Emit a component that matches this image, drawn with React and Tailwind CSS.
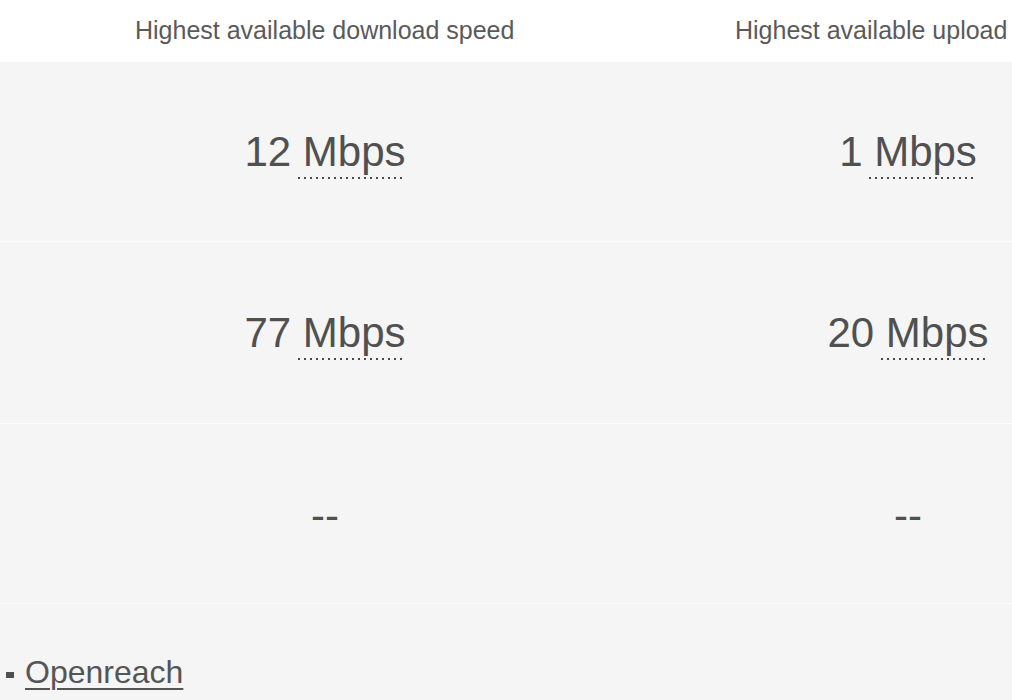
import React from "react";

const font = { fontFamily: '"Liberation Sans", Arial, sans-serif' };

function Unit({ children }) {
  return (
    <span className="relative inline-block">
      {children}
      <span className="absolute left-[-5px] right-0 top-[57px] h-[2px] bg-[image:repeating-linear-gradient(to_right,#4a4a4a_0px,#4a4a4a_2px,transparent_2px,transparent_6px)]" />
    </span>
  );
}

function Row({ h, a, b }) {
  return (
    <div className={`grid grid-cols-[125px_400px_183px_400px] items-center border-b border-[#fcfcfc] ${h} text-[42px] text-[#505050]`}>
      <div />
      <div className="text-center whitespace-nowrap">{a}</div>
      <div />
      <div className="text-center whitespace-nowrap">{b}</div>
    </div>
  );
}

export default function App() {
  return (
    <div className="w-[1012px] h-[700px] overflow-hidden bg-[#f5f5f5]" style={font}>
      <div className="grid grid-cols-[135px_600px_277px] h-[62px] bg-white pt-[16px] text-[25px] leading-[28px] text-[#5a5a5a] whitespace-nowrap overflow-hidden">
        <div />
        <div>Highest available download speed</div>
        <div>Highest available upload</div>
      </div>
      <Row h="h-[180px]" a={<>12 <Unit>Mbps</Unit></>} b={<>1 <Unit>Mbps</Unit></>} />
      <Row h="h-[182px]" a={<>77 <Unit>Mbps</Unit></>} b={<>20 <Unit>Mbps</Unit></>} />
      <Row h="h-[180px]" a={<span className="relative top-[2px]">--</span>} b={<span className="relative top-[2px]">--</span>} />
      <div className="flex items-center pt-[44px] pl-[6px] text-[32px] text-[#555]">
        <span className="inline-block w-[8px] h-[6px] bg-[#505050] mr-[11px] mt-[6px]" />
        <span className="underline underline-offset-[5px] decoration-[2px]">Openreach</span>
      </div>
    </div>
  );
}
